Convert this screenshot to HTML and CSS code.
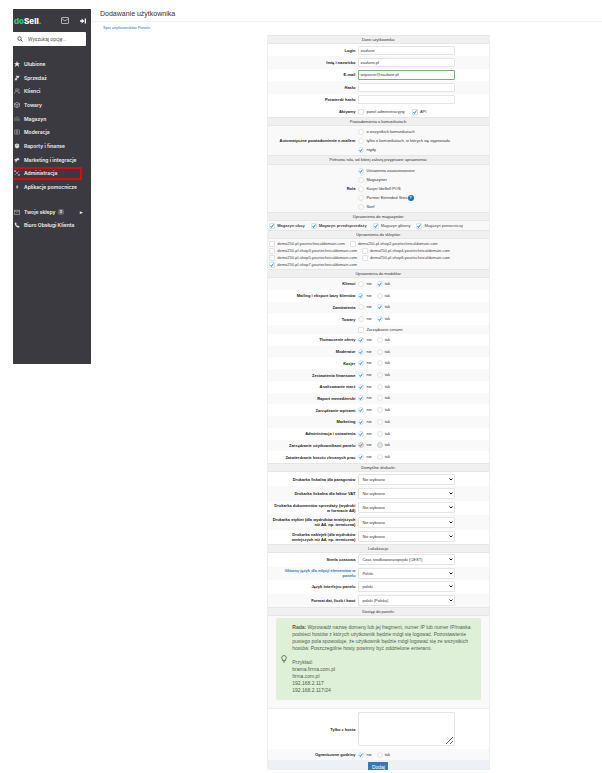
FILE: index.html
```html
<!DOCTYPE html>
<html lang="pl">
<head>
    <meta charset="UTF-8">
    <meta name="viewport" content="width=device-width, initial-scale=1.0">
    <title>Dodawanie użytkownika</title>
    <link rel="stylesheet" href="styles.css">
</head>
<body>

<div class="page">
    <aside class="sidebar">
        <div class="top">
            <a href="#" class="logo"><span>do</span>Sell<span>.</span></a>
            <svg class="mail" viewBox="0 0 16 14" fill="none" stroke="#ccc" stroke-width="1.6"><rect x="1" y="1" width="14" height="12" rx="1"/><path d="M1 3l7 5 7-5"/></svg>
            <svg class="fold" viewBox="0 0 14 14" fill="#fff"><path d="M0 5h4V1l6 6-6 6V9H0zM11 1h3v12h-3z"/></svg>
        </div>
        <label class="search">
            <svg viewBox="0 0 14 14" fill="none" stroke="#444" stroke-width="2"><circle cx="6" cy="6" r="4"/><path d="M9 9l4 4"/></svg>
            <input type="text" placeholder="Wyszukaj opcję..." aria-label="Wyszukaj opcję">
        </label>
        <nav>
            <ul class="menu">
                <li><a href="#"><svg viewBox="0 0 14 14" fill="#eee"><path d="M7 0l2 5h5l-4 3 2 6-5-4-5 4 2-6-4-3h5z"/></svg>Ulubione</a></li>
                <li><a href="#"><svg viewBox="0 0 14 14" fill="#ccc"><path d="M4 2h9l-2 5H8l-1 5H1l2-5h3z"/></svg>Sprzedaż</a></li>
                <li><a href="#"><svg viewBox="0 0 14 14" fill="none" stroke="#bbb" stroke-width="1.4"><circle cx="6" cy="4" r="2.5"/><path d="M1 13c0-7 10-7 10 0M10 2c3 0 3 4 0 5M12 9l2 4"/></svg>Klienci</a></li>
                <li><a href="#"><svg viewBox="0 0 14 14" fill="none" stroke="#ccc" stroke-width="1.4"><path d="M7 1l6 3v6l-6 3-6-3V4zM1 4l6 3 6-3M7 7v6"/></svg>Towary</a></li>
                <li><a href="#"><svg viewBox="0 0 14 14" fill="none" stroke="#999" stroke-width="1.4"><path d="M2 12V5l5-3 5 3v7M5 12V7h4v5"/></svg>Magazyn</a></li>
                <li><a href="#"><svg viewBox="0 0 14 14" fill="none" stroke="#aaa" stroke-width="1.4"><rect x="1" y="2" width="12" height="10" rx="2"/><path d="M4 5h6M4 9h6M7 3v8"/></svg>Moderacja</a></li>
                <li><a href="#"><svg viewBox="0 0 14 14" fill="#ddd"><path d="M2 3l5-2 5 2v7l-5 3-5-3z"/><path d="M4 5h6" stroke="#3b3a40"/></svg>Raporty i finanse</a></li>
                <li><a href="#"><svg viewBox="0 0 14 14" fill="#ddd"><path d="M1 6l9-4 3 5-6 1-2 5-2-1 1-3H2z"/></svg>Marketing i integracje</a></li>
                <li class="active"><a href="#"><svg viewBox="0 0 14 14" fill="none" stroke="#aaa" stroke-width="1.6"><path d="M2 2l10 10M12 2L2 12M1 5V1h4M13 9v4H9"/></svg>Administracja</a></li>
                <li><a href="#"><svg viewBox="0 0 14 14" fill="#ccc"><path d="M8 1L4 8h3l-1 5 5-7H8z"/></svg>Aplikacje pomocnicze</a></li>
            </ul>
            <ul class="menu bottom">
                <li><a href="#"><svg viewBox="0 0 14 14" fill="none" stroke="#bbb" stroke-width="1.4"><path d="M1 3h12v10H1zM1 3l6 5 6-5"/></svg>Twoje sklepy <span class="count">3</span><span class="caret">▸</span></a></li>
                <li><a href="#"><svg viewBox="0 0 14 14" fill="#ddd"><path d="M2 2l3-1 1 4-1 1c1 2 2 3 3 3l1-1 4 2-1 3C6 14 1 8 2 2z"/></svg>Biuro Obsługi Klienta</a></li>
            </ul>
        </nav>
    </aside>

    <main>
        <h1>Dodawanie użytkownika</h1>
        <a href="#" class="list-link">Spis użytkowników Panelu</a>

        <form action="#" method="post">
            <h2>Dane użytkownika:</h2>
            <div class="inputs">
                <div class="row"><label class="name" for="login">Login</label><div class="field"><input type="text" id="login" value="zaufane"></div></div>
                <div class="row"><label class="name" for="fullName">Imię i nazwisko</label><div class="field"><input type="text" id="fullName" value="zaufane.pl"></div></div>
                <div class="row"><label class="name" for="email">E-mail</label><div class="field"><input type="text" id="email" class="valid" value="wsparcie@zaufane.pl"></div></div>
                <div class="row"><label class="name" for="password">Hasło</label><div class="field"><input type="password" id="password"></div></div>
                <div class="row"><label class="name" for="password2">Potwierdź hasło</label><div class="field"><input type="password" id="password2"></div></div>
            </div>
            <div class="row short">
                <span class="name">Aktywny</span>
                <div class="field options wide">
                    <label><input type="checkbox"> panel administracyjny</label>
                    <label><input type="checkbox" checked> API</label>
                </div>
            </div>

            <h2>Powiadomienia o komunikatach:</h2>
            <div class="row grey">
                <span class="name">Automatyczne powiadomienie e-mailem</span>
                <div class="field stack">
                    <label><input type="radio" name="notify"> o wszystkich komunikatach</label>
                    <label><input type="radio" name="notify"> tylko o komunikatach, w których się wypowiada</label>
                    <label><input type="radio" name="notify" checked> nigdy</label>
                </div>
            </div>

            <h2 class="tall">Pełniona rola, od której zależą przypisane uprawnienia:</h2>
            <div class="row grey">
                <span class="name">Rola</span>
                <div class="field stack">
                    <label><input type="radio" name="role" checked> Ustawienia zaawansowane</label>
                    <label><input type="radio" name="role"> Magazynier</label>
                    <label><input type="radio" name="role"> Kasjer IdoSell POS</label>
                    <label><input type="radio" name="role"> Partner Extended Sites<span class="help">?</span></label>
                    <label><input type="radio" name="role"> Szef</label>
                </div>
            </div>

            <h2>Uprawnienia do magazynów:</h2>
            <div class="stocks">
                <label><input type="checkbox" checked> <b>Magazyn obcy</b></label>
                <label><input type="checkbox" checked> <b>Magazyn przedsprzedaży</b></label>
                <label><input type="checkbox" checked> Magazyn główny</label>
                <label><input type="checkbox" checked> Magazyn pomocniczy</label>
            </div>

            <h2>Uprawnienia do sklepów:</h2>
            <div class="shops">
                <div><label><input type="checkbox"> demo250-pl.yourtechnicaldomain.com</label><label><input type="checkbox"> demo250-pl-shop2.yourtechnicaldomain.com</label></div>
                <div><label><input type="checkbox"> demo250-pl-shop3.yourtechnicaldomain.com</label><label><input type="checkbox"> demo250-pl-shop4.yourtechnicaldomain.com</label></div>
                <div><label><input type="checkbox"> demo250-pl-shop5.yourtechnicaldomain.com</label><label><input type="checkbox"> demo250-pl-shop6.yourtechnicaldomain.com</label></div>
                <div><label><input type="checkbox" checked> demo250-pl-shop7.yourtechnicaldomain.com</label></div>
            </div>

            <h2>Uprawnienia do modułów:</h2>
            <div class="modules first">
                <div class="row"><span class="name">Klienci</span><div class="field options"><label><input type="radio" name="m1"> nie</label><label><input type="radio" name="m1" checked> tak</label></div></div>
                <div class="row"><span class="name">Mailing i eksport bazy klientów</span><div class="field options"><label><input type="radio" name="m2" checked> nie</label><label><input type="radio" name="m2"> tak</label></div></div>
                <div class="row"><span class="name">Zamówienia</span><div class="field options"><label><input type="radio" name="m3"> nie</label><label><input type="radio" name="m3" checked> tak</label></div></div>
                <div class="row"><span class="name">Towary</span><div class="field options"><label><input type="radio" name="m4"> nie</label><label><input type="radio" name="m4" checked> tak</label></div></div>
            </div>
            <div class="row grey price"><span class="name"></span><div class="field options"><label><input type="checkbox"> Zarządzanie cenami</label></div></div>
            <div class="modules">
                <div class="row"><span class="name">Tłumaczenie oferty</span><div class="field options"><label><input type="radio" name="m5" checked> nie</label><label><input type="radio" name="m5"> tak</label></div></div>
                <div class="row"><span class="name">Moderator</span><div class="field options"><label><input type="radio" name="m6" checked> nie</label><label><input type="radio" name="m6"> tak</label></div></div>
                <div class="row"><span class="name">Kasjer</span><div class="field options"><label><input type="radio" name="m7" checked> nie</label><label><input type="radio" name="m7"> tak</label></div></div>
                <div class="row"><span class="name">Zestawienia finansowe</span><div class="field options"><label><input type="radio" name="m8" checked> nie</label><label><input type="radio" name="m8"> tak</label></div></div>
                <div class="row"><span class="name">Analizowanie marż</span><div class="field options"><label><input type="radio" name="m9" checked> nie</label><label><input type="radio" name="m9"> tak</label></div></div>
                <div class="row"><span class="name">Raport menedżerski</span><div class="field options"><label><input type="radio" name="m10" checked> nie</label><label><input type="radio" name="m10"> tak</label></div></div>
                <div class="row"><span class="name">Zarządzanie wpisami</span><div class="field options"><label><input type="radio" name="m11" checked> nie</label><label><input type="radio" name="m11"> tak</label></div></div>
                <div class="row"><span class="name">Marketing</span><div class="field options"><label><input type="radio" name="m12" checked> nie</label><label><input type="radio" name="m12"> tak</label></div></div>
                <div class="row"><span class="name">Administracja i ustawienia</span><div class="field options"><label><input type="radio" name="m13" checked> nie</label><label><input type="radio" name="m13"> tak</label></div></div>
                <div class="row"><span class="name">Zarządzanie użytkownikami panelu</span><div class="field options"><label><input type="radio" name="m14" checked disabled> nie</label><label><input type="radio" name="m14" disabled> tak</label></div></div>
                <div class="row"><span class="name">Zatwierdzanie kosztu zlecanych prac</span><div class="field options"><label><input type="radio" name="m15" checked> nie</label><label><input type="radio" name="m15"> tak</label></div></div>
            </div>

            <h2>Domyślne drukarki:</h2>
            <div class="selects printers">
                <div class="row"><label class="name" for="p1">Drukarka fiskalna dla paragonów</label><div class="field"><select id="p1"><option>Nie wybrano</option></select></div></div>
                <div class="row"><label class="name" for="p2">Drukarka fiskalna dla faktur VAT</label><div class="field"><select id="p2"><option>Nie wybrano</option></select></div></div>
                <div class="row"><label class="name" for="p3">Drukarka dokumentów sprzedaży (wydruki w&nbsp;formacie A4)</label><div class="field"><select id="p3"><option>Nie wybrano</option></select></div></div>
                <div class="row"><label class="name" for="p4">Drukarka etykiet (dla wydruków mniejszych niż A4, np. termiczna)</label><div class="field"><select id="p4"><option>Nie wybrano</option></select></div></div>
                <div class="row"><label class="name" for="p5">Drukarka naklejek (dla wydruków<br>mniejszych niż A4, np. termiczna)</label><div class="field"><select id="p5"><option>Nie wybrano</option></select></div></div>
            </div>

            <h2>Lokalizacja:</h2>
            <div class="selects">
                <div class="row"><label class="name" for="zone">Strefa czasowa</label><div class="field"><select id="zone"><option>Czas środkowoeuropejski (CEST)</option></select></div></div>
                <div class="row"><label class="name blue" for="mainLang">Główny język dla edycji elementów w<br>panelu</label><div class="field"><select id="mainLang"><option>Polski</option></select></div></div>
                <div class="row"><label class="name" for="panelLang">Język interfejsu panelu</label><div class="field"><select id="panelLang"><option>polski</option></select></div></div>
                <div class="row"><label class="name" for="format">Format dat, liczb i kwot</label><div class="field"><select id="format"><option>polski (Polska)</option></select></div></div>
            </div>

            <h2>Dostęp do panelu:</h2>
            <div class="tip-row">
                <div class="tip">
                    <svg viewBox="0 0 14 18" fill="none" stroke="#3c5a3c" stroke-width="2"><path d="M4 11C-1 6 3 1 7 1s8 5 3 10v2H4zM5 16h4"/></svg>
                    <div>
                        <p><b>Rada:</b> Wprowadź nazwę domeny lub jej fragment, numer IP lub numer IP/maska podsieci hostów z których użytkownik będzie mógł się logować. Pozostawienie pustego pola spowoduje, że użytkownik będzie mógł logować się ze wszystkich hostów. Poszczególne hosty powinny być oddzielone enterami.</p>
                        <p>Przykład:<br>brama.firma.com.pl<br>firma.com.pl<br>192.168.2.117<br>192.168.2.117/24</p>
                    </div>
                </div>
            </div>
            <div class="row"><label class="name" for="hosts">Tylko z hosta</label><div class="field"><textarea id="hosts"></textarea></div></div>
            <div class="row grey short"><span class="name">Ograniczone godziny</span><div class="field options"><label><input type="radio" name="hours" checked> nie</label><label><input type="radio" name="hours"> tak</label></div></div>
            <div class="actions"><button type="submit">Dodaj</button></div>
        </form>
    </main>
</div>

</body>
</html>
```
FILE: styles.css
```css
* {
    box-sizing: border-box;
}
body {
    font-family: "Liberation Sans", Arial, sans-serif;
    font-size: 4px;
    line-height: 6px;
    color: #444;
    background-color: #fff;
    margin: 0;
}
a {
    text-decoration: none;
}
.page {
    display: flex;
    align-items: flex-start;
    padding: 9px 0 0 13px;
}

/* Sidebar */
.sidebar {
    flex: 0 0 78px;
    background-color: #3b3a40;
    font-family: Inter, sans-serif;
    font-size: 5px;
    padding-bottom: 132px;
}
.top {
    display: flex;
    align-items: center;
    height: 23px;
    padding-right: 5px;
}
.logo {
    flex: 1;
    padding-left: 1px;
    color: #fff;
    font-size: 8px;
    font-weight: 800;
}
.logo span {
    color: #1fc98a;
}
.mail {
    width: 8px;
    height: 7px;
    margin-right: 11px;
}
.fold {
    width: 6px;
    height: 6px;
}
.search {
    display: flex;
    align-items: center;
    gap: 5px;
    height: 14px;
    margin-right: 5px;
    padding-left: 4px;
    background-color: #fff;
    border-radius: 0 1px 1px 0;
}
.search svg {
    flex: none;
    width: 6px;
    height: 6px;
}
.search input {
    width: 100%;
    min-width: 0;
    padding: 0;
    border: none;
    font-family: Roboto, sans-serif;
    font-size: 5px;
}
.search input::placeholder {
    color: #555;
}
.menu {
    display: grid;
    grid-auto-rows: 1fr;
    min-height: 137px;
    list-style: none;
    margin: 11px 0 0;
    padding: 0;
}
.menu a {
    display: flex;
    align-items: center;
    height: 100%;
    padding-left: 1px;
    color: #eee;
    font-weight: 600;
    white-space: nowrap;
}
.menu svg {
    width: 6px;
    height: 6px;
    margin-right: 4px;
}
.menu .active {
    margin-right: 9px;
    border: 2px solid #e4040c;
    border-left: none;
}
.menu.bottom {
    min-height: 27px;
}
.count {
    margin-left: 2px;
    padding: 0 2px;
    border-radius: 2px;
    background-color: #66656b;
    font-size: 4px;
}
.caret {
    margin: 0 8px 0 auto;
}

/* Content */
main {
    flex: 1;
    min-width: 0;
}
h1 {
    margin: 0;
    padding: 0 0 2px 9px;
    border-bottom: 1px solid #f3f3f3;
    color: #333;
    font-size: 7px;
    font-weight: normal;
    line-height: 10px;
}
.list-link {
    display: block;
    margin: 3px 0 4px 12px;
    color: #337ab7;
}
form {
    margin: 0 22% 0 34.5%;
    border: 1px solid #eee;
    border-width: 0 1px;
}
h2 {
    height: 9px;
    margin: 0;
    border: 1px solid #e6e6e6;
    border-width: 1px 0;
    background-color: #f0f0f0;
    color: #333;
    font-size: 4px;
    font-weight: normal;
    line-height: 7px;
    text-align: center;
}
h2.tall {
    height: 10px;
    line-height: 8px;
}
.row {
    display: grid;
    grid-template-columns: 40% 60%;
    align-items: center;
    color: #333;
}
.row.short {
    min-height: 11px;
}
.grey,
.inputs .row:nth-child(even),
.modules .row:nth-child(even),
.modules.first .row:nth-child(odd),
.selects .row:nth-child(even) {
    background-color: #f9f9f9;
}
.modules.first .row:nth-child(even) {
    background-color: #fff;
}
.name {
    padding-right: 1px;
    color: #222;
    font-weight: bold;
    line-height: 5px;
    text-align: right;
}
.blue {
    color: #337ab7;
}
.field {
    padding-left: 2px;
}
.inputs,
.modules,
.selects {
    display: grid;
    grid-auto-rows: 1fr;
}
.inputs {
    min-height: 62px;
}
.modules {
    min-height: 129px;
}
.modules.first {
    min-height: 47px;
}
.selects {
    min-height: 54px;
}
.printers {
    min-height: 72px;
}
.field > input,
select,
textarea {
    display: block;
    width: 74%;
    border: 1px solid #e4e4e4;
    border-radius: 1px;
    background-color: #fff;
    color: #333;
    font-family: inherit;
    font-size: 4px;
}
.field > input {
    height: 9px;
    padding: 0 1px;
}
.field > input.valid {
    height: 10px;
    border-color: #7db07d;
}
select {
    height: 11px;
    padding: 0 3px;
    appearance: none;
    background: #fff url("data:image/svg+xml,%3Csvg xmlns='http://www.w3.org/2000/svg' viewBox='0 0 8 6'%3E%3Cpath d='M1 1l3 3 3-3' fill='none' stroke='%23222' stroke-width='2'/%3E%3C/svg%3E") no-repeat right 1px center / 4px 3px;
}
textarea {
    height: 34px;
    margin: 3px 0;
}

/* Tick boxes and radios */
input[type="checkbox"],
input[type="radio"] {
    flex: none;
    width: 6px;
    height: 6px;
    margin: 0 2px 0 0;
    appearance: none;
    border: 1px solid #e2e2e2;
    border-radius: 1px;
    background-color: #fff;
}
input[type="radio"] {
    border-radius: 3px;
}
input[type="checkbox"]:checked,
input[type="radio"]:checked {
    border-color: #d3e5ef;
    background-image: url("data:image/svg+xml,%3Csvg xmlns='http://www.w3.org/2000/svg' viewBox='0 0 8 8'%3E%3Cpath d='M1 4l2 3 4-6' fill='none' stroke='%232a8fc7' stroke-width='2'/%3E%3C/svg%3E");
}
input[type="radio"]:disabled {
    border-color: #ccc;
    background-color: #e4e4e4;
    filter: grayscale(1);
}
.field label,
.stocks label,
.shops label {
    display: flex;
    align-items: center;
    white-space: nowrap;
}
.options {
    display: flex;
    gap: 5px;
}
.options label {
    min-width: 13px;
}
.options.wide {
    gap: 7px;
}
.stack {
    display: grid;
    gap: 3px;
    padding-top: 3px;
    padding-bottom: 2px;
}
.help {
    width: 6px;
    height: 6px;
    border-radius: 50%;
    background-color: #1f6fb5;
    color: #fff;
    font-weight: bold;
    text-align: center;
}
.stocks {
    display: flex;
    gap: 6px;
    height: 9px;
    padding-left: 1px;
    background-color: #f9f9f9;
}
.shops {
    padding: 1px;
    background-color: #f9f9f9;
}
.shops div {
    display: flex;
    gap: 5px;
    height: 7px;
}
.price {
    height: 9px;
}

/* Hint */
.tip-row {
    padding: 2px 8px 8px;
    background-color: #f9f9f9;
    border-bottom: 1px solid #eee;
}
.tip {
    display: flex;
    align-items: center;
    gap: 5px;
    padding: 6px 5px;
    border-radius: 2px;
    background-color: #dff0d8;
    color: #4f5f4f;
    font-size: 5px;
    line-height: 7px;
}
.tip svg {
    flex: none;
    width: 6px;
    height: 8px;
}
.tip p {
    margin: 0;
}
.tip p + p {
    margin-top: 7px;
}
.actions {
    height: 10px;
    padding-top: 2px;
    overflow: hidden;
    background-color: #edf0f5;
    text-align: center;
}
button {
    display: block;
    width: 20px;
    height: 10px;
    margin: 0 auto;
    padding: 0;
    border: none;
    background-color: #337ab7;
    color: #fff;
    font-family: inherit;
    font-size: 5px;
}
```
